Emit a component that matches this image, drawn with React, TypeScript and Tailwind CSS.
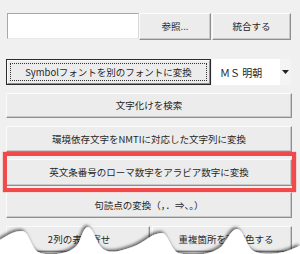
import React from "react";

const font = { fontFamily: '"Noto Sans CJK JP", "Noto Sans", sans-serif' };

const btnBase =
  "flex items-center justify-center bg-[#ececec] border border-t-[#fbfbfb] border-l-[#fbfbfb] border-r-[#8e8e8e] border-b-[#8e8e8e] shadow-[inset_-1px_-1px_0_#c9c9c9] text-[9.5px] text-[#262626] whitespace-nowrap overflow-hidden";

function Btn({ children, className = "" }: { children: React.ReactNode; className?: string }) {
  return <div className={`${btnBase} ${className}`}>{children}</div>;
}

export default function App() {
  return (
    <div className="relative w-[300px] h-[254px] overflow-hidden bg-[#f0f0f0]" style={font}>
      <div className="flex flex-col pl-[6px] pt-[13px]">
        {/* row 1 */}
        <div className="flex h-[27px]">
          <div className="ml-[1px] w-[132px] h-[26px] bg-white border border-t-[#a8a8a8] border-l-[#a8a8a8] border-r-[#d8d8d8] border-b-[#e8e8e8]" />
          <Btn className="w-[72px] h-[27px]">参照...</Btn>
          <Btn className="ml-[1px] w-[79px] h-[27px]">統合する</Btn>
        </div>
        {/* row 2 */}
        <div className="flex mt-[19px] h-[26px]">
          <div className="w-[205px] h-[26px] border border-[#2a2a2a] flex">
            <div className="flex-1 flex items-center justify-center bg-[#ececec] border border-t-[#fbfbfb] border-l-[#fbfbfb] border-r-[#8e8e8e] border-b-[#8e8e8e] p-[2px]">
              <div className="w-full h-full flex items-center justify-center border border-dotted border-[#333] text-[9.5px] text-[#262626] whitespace-nowrap">
                Symbolフォントを別のフォントに変換
              </div>
            </div>
          </div>
          <div className="ml-[1px] w-[79px] h-[26px] flex items-center bg-[#f4f4f4]">
            <div className="flex-1 h-full bg-white flex items-center pl-[8px] text-[10px] text-[#222] whitespace-nowrap">
              ＭＳ 明朝
            </div>
            <div className="w-[11px] h-full flex items-center justify-center">
              <svg width="7" height="4" viewBox="0 0 7 4">
                <path d="M0 0 L7 0 L3.5 4 Z" fill="#222" />
              </svg>
            </div>
          </div>
        </div>
        {/* rows */}
        <Btn className="mt-[8px] w-[286px] h-[25px]">文字化けを検索</Btn>
        <Btn className="mt-[8px] w-[286px] h-[26px]">環境依存文字をNMTIに対応した文字列に変換</Btn>
        <div className="relative mt-[7px] w-[286px] h-[27px]">
          <Btn className="w-[286px] h-[27px]">英文条番号のローマ数字をアラビア数字に変換</Btn>
          <div className="absolute left-[-3px] top-[-7px] w-[293px] h-[40px] border-[4px] border-[#f24a4a] shadow-[0_0_1px_#f24a4a]" />
        </div>
        <Btn className="mt-[6px] w-[286px] h-[26px]">句読点の変換（，．⇒、。）</Btn>
        <div className="flex mt-[8px] h-[26px]">
          <Btn className="w-[144px] h-[26px] pl-[2px]">2列の表を寄せ</Btn>
          <Btn className="ml-[2px] w-[140px] h-[26px] pl-[8px]">重複箇所を強調色する</Btn>
        </div>
      </div>

      {/* torn paper edge */}
      <svg className="absolute left-0 bottom-0" width="300" height="32" viewBox="0 0 300 32">
        <defs>
          <filter id="sh" x="-10%" y="-50%" width="120%" height="200%">
            <feDropShadow dx="-1.5" dy="-2" stdDeviation="1.8" floodColor="#000" floodOpacity="0.55" />
          </filter>
        </defs>
        <path
          d="M0,18 C6,14 14,9 22,9 C29,9 31,26 38,30 C45,34 70,34 78,22 C82,14 84,5 88,5 C93,5 96,20 102,26 C108,32 120,30 135,24 C145,20 152,11 162,11 C168,11 170,26 178,31 C190,34 212,34 222,24 C228,16 232,7 237,7 C243,7 246,22 252,28 C260,34 280,32 290,28 C294,26 297,25 300,24 L300,40 L0,40 Z"
          fill="#ffffff"
          filter="url(#sh)"
        />
      </svg>
    </div>
  );
}
